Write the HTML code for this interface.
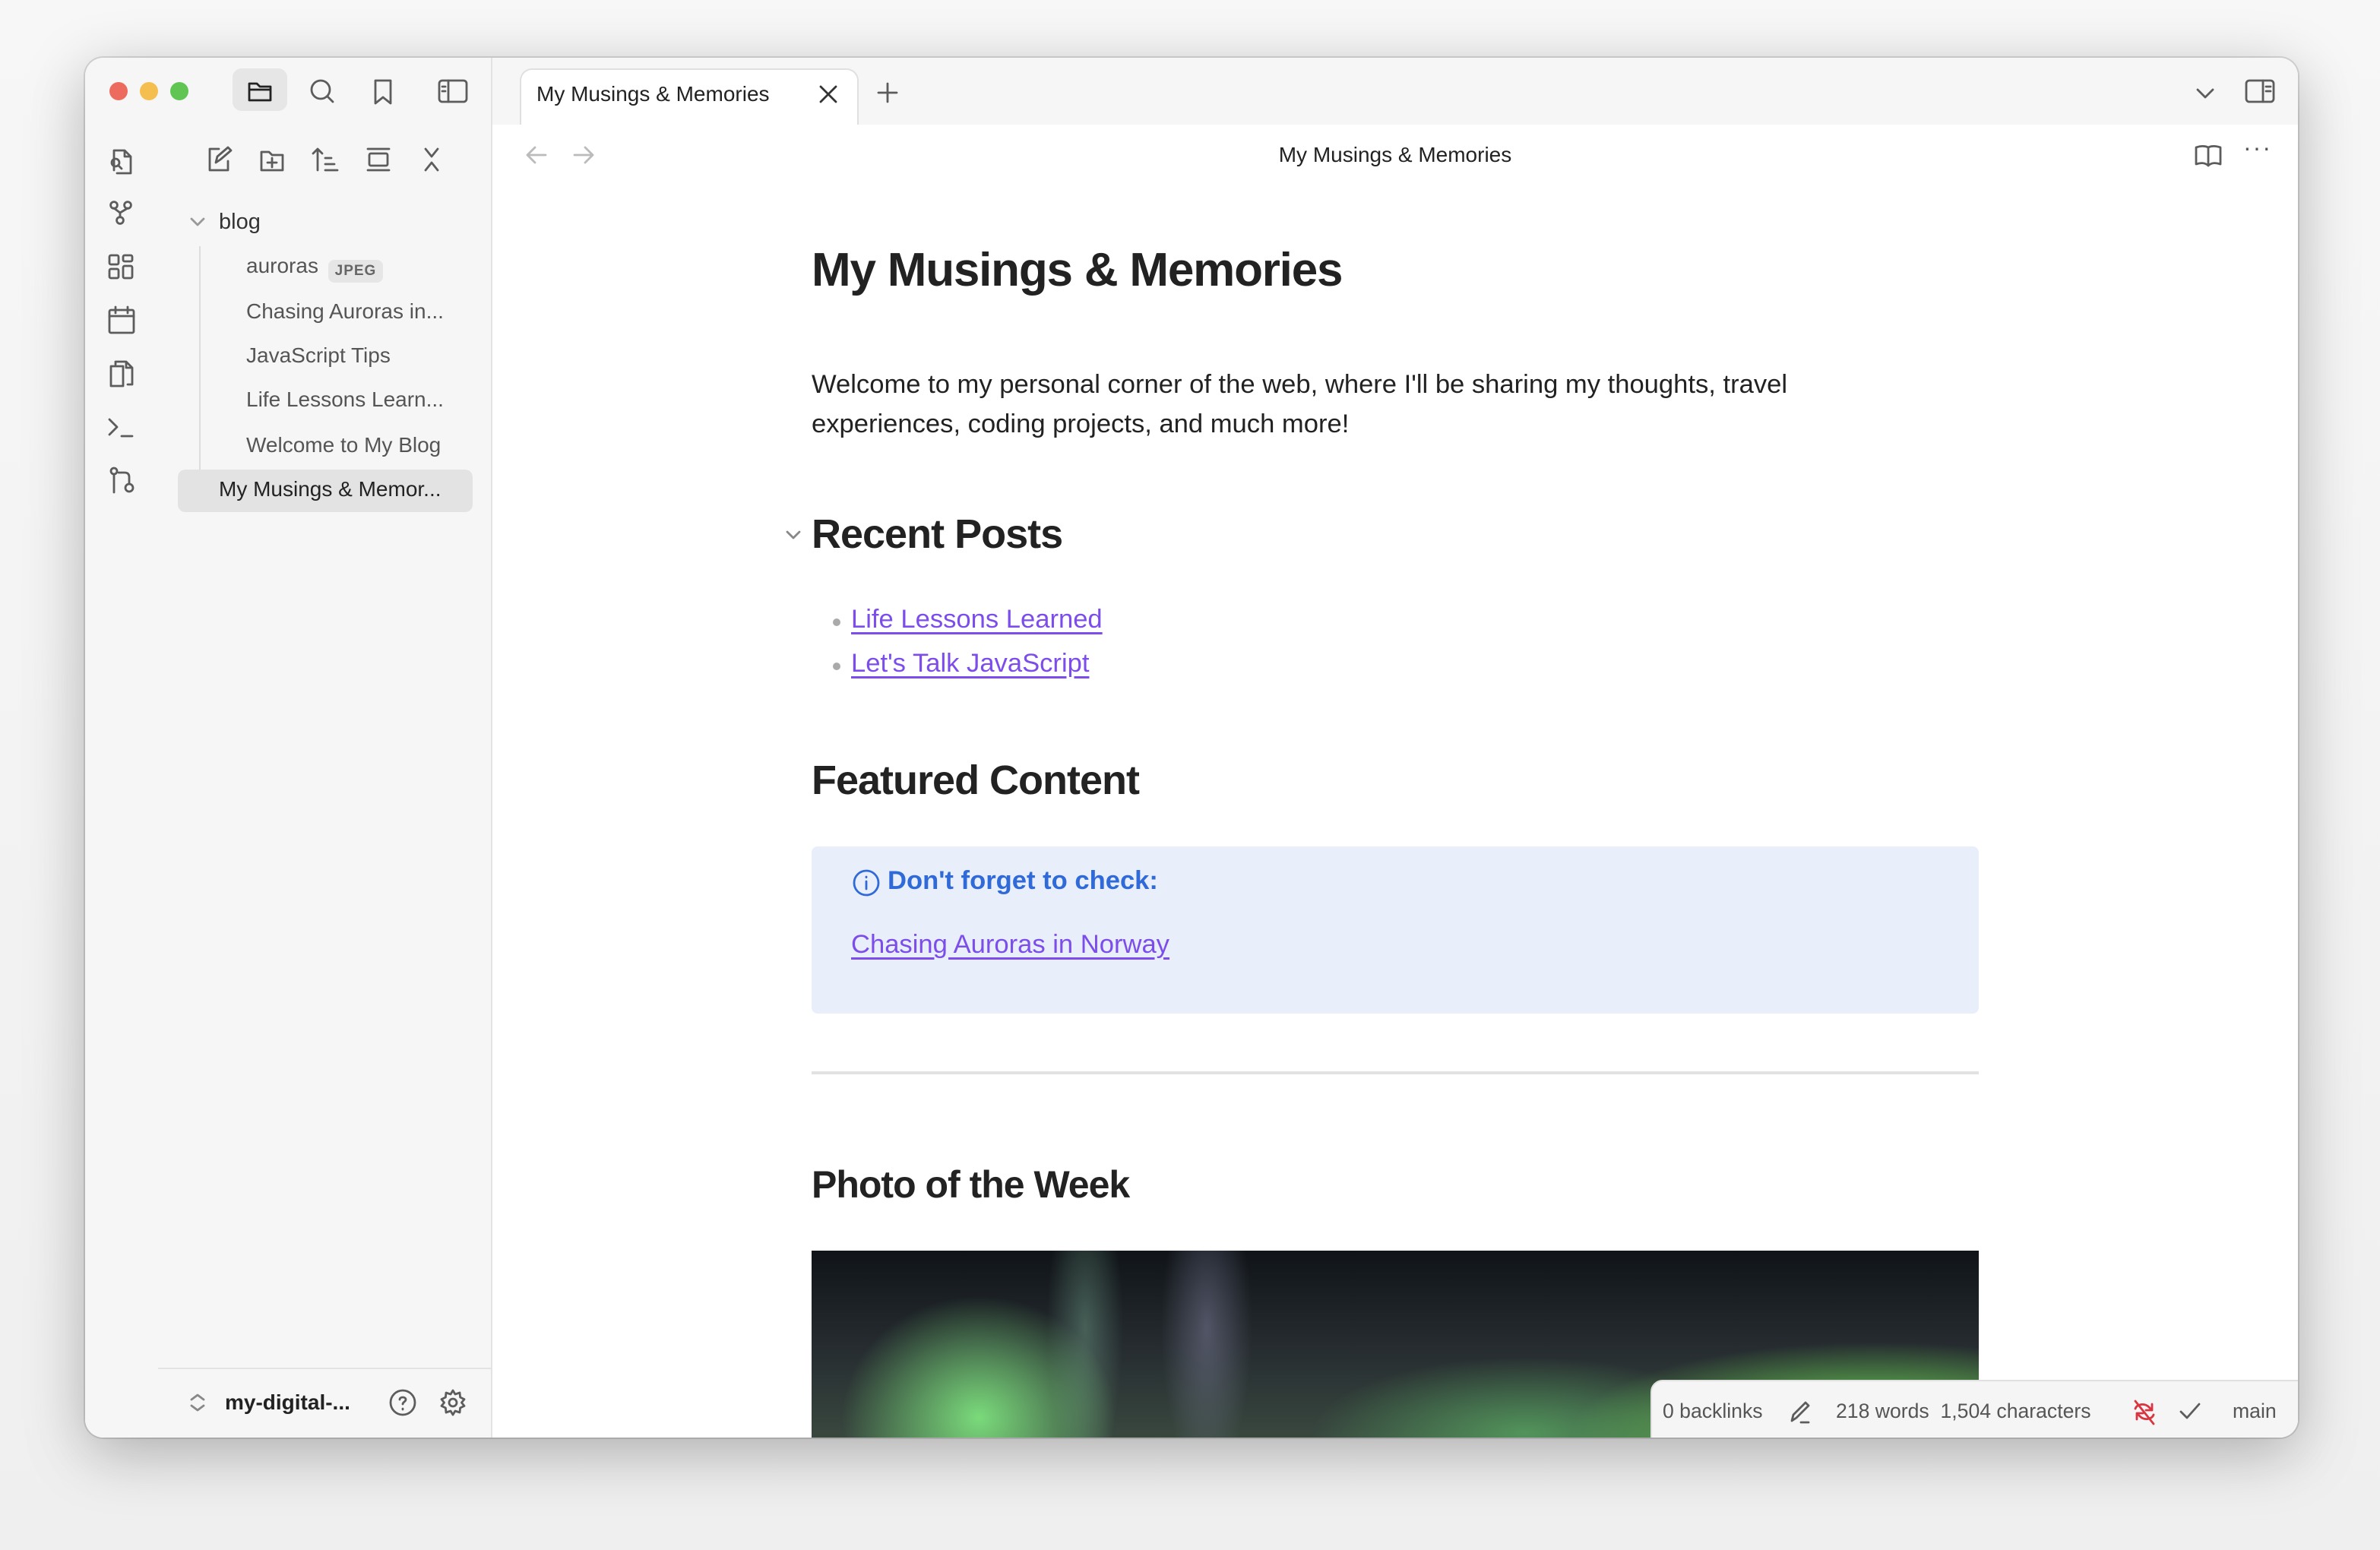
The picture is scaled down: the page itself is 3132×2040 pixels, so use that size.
<!DOCTYPE html>
<html><head><meta charset="utf-8"><style>
html,body{margin:0;padding:0;width:3132px;height:2040px;overflow:hidden;background:#f4f4f4}
.s{zoom:2;width:1566px;height:1020px;position:relative;font-family:"Liberation Sans",sans-serif;background:linear-gradient(#f7f7f7,#efefef)}
.win{position:absolute;left:56px;top:38px;width:1456px;height:908px;border-radius:12px;overflow:hidden;background:#fff;box-shadow:0 10px 40px rgba(0,0,0,.28),0 0 0 1px rgba(0,0,0,.12)}
.abs{position:absolute}
.ic{position:absolute;fill:none;stroke:#5c5c5c;stroke-width:1.4;stroke-linecap:round;stroke-linejoin:round}
.tb{left:0;top:0;width:1456px;height:44px;background:#f6f6f6;border-bottom:1px solid #e0e0e0}
.rib{left:0;top:44px;width:48px;height:864px;background:#f6f6f6;border-right:1px solid #e3e3e3}
.side{left:48px;top:44px;width:219px;height:864px;background:#f6f6f6;border-right:1px solid #e3e3e3}
.ft{font-size:14px;color:#555;position:absolute;left:58px;white-space:nowrap}
.main{left:268px;top:44px;width:1188px;height:864px;background:#fff}
.c{position:absolute;left:210px;color:#222}
a{color:#7c4dea;text-decoration:underline;text-underline-offset:3px}
</style></head><body><div class="s"><div class="win">
<div class="abs tb">
 <div class="abs" style="left:16px;top:16px;width:12px;height:12px;border-radius:6px;background:#ed6a5e"></div>
 <div class="abs" style="left:36px;top:16px;width:12px;height:12px;border-radius:6px;background:#f5bf4f"></div>
 <div class="abs" style="left:56px;top:16px;width:12px;height:12px;border-radius:6px;background:#61c554"></div>
 <div class="abs" style="left:97px;top:7px;width:36px;height:28px;border-radius:6px;background:#e6e6e6"></div>
 <svg class="ic" style="left:105px;top:12px;stroke:#222" width="20" height="20"><path d="M3 5h5l2 2h7v9H3z M3 9h14"/></svg>
 <svg class="ic" style="left:146px;top:12px" width="20" height="20"><circle cx="9" cy="9" r="6"/><path d="M13.5 13.5L17 17"/></svg>
 <svg class="ic" style="left:186px;top:12px" width="20" height="20"><path d="M5 3h10v15l-5-4-5 4z"/></svg>
 <svg class="ic" style="left:231px;top:12px" width="22" height="20"><rect x="2" y="3" width="18" height="14" rx="2"/><path d="M8 3v14M4 7h2M4 10h2"/></svg>
 <div class="abs" style="left:267px;top:0;width:1px;height:44px;background:#e3e3e3"></div>
 <div class="abs" style="left:286px;top:7px;width:221px;height:38px;background:#fff;border:1px solid #e0e0e0;border-bottom:none;border-radius:8px 8px 0 0"></div>
 <div class="abs" style="left:297px;top:16px;font-size:14px;color:#222">My Musings &amp; Memories</div>
 <svg class="ic" style="left:481px;top:16px;stroke:#333" width="16" height="16"><path d="M3 3l10 10M13 3L3 13"/></svg>
 <svg class="ic" style="left:519px;top:14px" width="18" height="18"><path d="M9 3v12M3 9h12"/></svg>
 <svg class="ic" style="left:1386px;top:14px" width="18" height="18"><path d="M4 7l5 5 5-5"/></svg>
 <svg class="ic" style="left:1420px;top:12px" width="22" height="20"><rect x="2" y="3" width="18" height="14" rx="2"/><path d="M13 3v14M15 7h3M15 10h3"/></svg>
</div>
<div class="abs rib">
 <svg class="ic" style="left:13px;top:13px" width="22" height="22"><path d="M6 17V4h7l4 4v11H8M13 4v4h4"/><circle cx="7" cy="12" r="2.5"/><path d="M9 14l2 2"/></svg>
 <svg class="ic" style="left:13px;top:48px" width="22" height="22"><circle cx="6" cy="5" r="2.2"/><circle cx="15" cy="5" r="2.2"/><circle cx="10" cy="15" r="2.2"/><path d="M6 7l4 3 5-3M10 10v3"/></svg>
 <svg class="ic" style="left:13px;top:83px" width="22" height="22"><rect x="3" y="3" width="6" height="6" rx="1"/><rect x="12" y="3" width="6" height="4" rx="1"/><rect x="3" y="12" width="6" height="6" rx="1"/><rect x="12" y="10" width="6" height="8" rx="1"/></svg>
 <svg class="ic" style="left:13px;top:118px" width="22" height="22"><rect x="3" y="4" width="16" height="15" rx="1"/><path d="M3 8h16M7 2v4M15 2v4"/></svg>
 <svg class="ic" style="left:13px;top:153px" width="22" height="22"><path d="M7 5V3h7l4 4v11h-3M14 3v4h4"/><path d="M4 6h8v13H4z"/></svg>
 <svg class="ic" style="left:13px;top:188px" width="22" height="22"><path d="M3 6l5 5-5 5M11 17h7"/></svg>
 <svg class="ic" style="left:13px;top:223px" width="22" height="22"><circle cx="6" cy="5" r="2"/><path d="M6 7v12M9 6h4c2 0 3 1 3 3v4"/><circle cx="16" cy="16" r="2.5"/></svg>
</div>
<div class="abs side">
 <svg class="ic" style="left:30px;top:13px" width="20" height="20"><path d="M10 3H4v14h12v-6M8 12l1-4 7-6 2 2-7 6z"/></svg>
 <svg class="ic" style="left:65px;top:13px" width="20" height="20"><path d="M3 5h5l2 2h7v10H3z M10 9v6M7 12h6"/></svg>
 <svg class="ic" style="left:100px;top:13px" width="20" height="20"><path d="M5 17V3M2 6l3-3 3 3M10 9h4M10 13h6M10 17h8"/></svg>
 <svg class="ic" style="left:135px;top:13px" width="20" height="20"><path d="M3 3h14M3 17h14"/><rect x="4" y="6" width="12" height="8" rx="1"/></svg>
 <svg class="ic" style="left:170px;top:13px" width="20" height="20"><path d="M6 3l4 5 4-5M6 17l4-5 4 5"/></svg>
 <svg class="ic" style="left:20px;top:58px;stroke:#999" width="12" height="12"><path d="M2 4l4 4 4-4"/></svg>
 <div class="ft" style="left:40px;top:56px;color:#333;font-size:14.5px">blog</div>
 <div class="abs" style="left:27px;top:80px;width:1px;height:148px;background:#ddd"></div>
 <div class="ft" style="top:85px">auroras</div>
 <div class="abs" style="left:112px;top:89px;width:36px;height:15px;border-radius:4px;background:#e6e6e6;font-size:9.5px;font-weight:bold;color:#666;text-align:center;line-height:15px;letter-spacing:.5px">JPEG</div>
 <div class="ft" style="top:115px">Chasing Auroras in...</div>
 <div class="ft" style="top:144px">JavaScript Tips</div>
 <div class="ft" style="top:173px">Life Lessons Learn...</div>
 <div class="ft" style="top:203px">Welcome to My Blog</div>
 <div class="abs" style="left:13px;top:227px;width:194px;height:28px;border-radius:5px;background:#e3e3e3"></div>
 <div class="ft" style="left:40px;top:232px;color:#222">My Musings &amp; Memor...</div>
 <div class="abs" style="left:0;top:818px;width:219px;height:1px;background:#e3e3e3"></div>
 <svg class="ic" style="left:20px;top:834px;stroke:#888" width="12" height="14"><path d="M2 5l4-3 4 3M2 9l4 3 4-3"/></svg>
 <div class="ft" style="left:44px;top:833px;color:#222;font-weight:bold;font-size:14px">my-digital-...</div>
 <svg class="ic" style="left:151px;top:831px" width="20" height="20"><circle cx="10" cy="10" r="8"/><path d="M8 8c0-2 4-2 4 0 0 1.5-2 1.5-2 3M10 14v.5"/></svg>
 <svg class="ic" style="left:184px;top:831px" width="20" height="20"><circle cx="10" cy="10" r="2.5"/><path d="M10 2l1.5 2.5 3-1 .3 3 2.7 1.3-1.8 2.2 1.8 2.2-2.7 1.3-.3 3-3-1L10 18l-1.5-2.5-3 1-.3-3L2.5 12.2 4.3 10 2.5 7.8l2.7-1.3.3-3 3 1z"/></svg>
</div>
<div class="abs main">
 <svg class="ic" style="left:20px;top:12px;stroke:#bbb" width="18" height="16"><path d="M15 8H3M8 3L3 8l5 5"/></svg>
 <svg class="ic" style="left:51px;top:12px;stroke:#bbb" width="18" height="16"><path d="M3 8h12M10 3l5 5-5 5"/></svg>
 <div class="abs" style="left:0;width:1188px;top:12px;text-align:center;font-size:14px;color:#222">My Musings &amp; Memories</div>
 <svg class="ic" style="left:1119px;top:11px" width="20" height="18"><path d="M10 4v12M10 4C8 3 5 3 2 4v11c3-1 6-1 8 1 2-2 5-2 8-1V4c-3-1-6-1-8 0"/></svg>
 <div class="abs" style="left:1152px;top:6px;font-size:16px;color:#555;letter-spacing:1px">···</div>
 <div class="c" style="top:78px;font-size:31px;font-weight:bold;letter-spacing:-.6px">My Musings &amp; Memories</div>
 <div class="c" style="top:158px;font-size:17.3px;line-height:26px;width:700px">Welcome to my personal corner of the web, where I'll be sharing my thoughts, travel experiences, coding projects, and much more!</div>
 <svg class="ic" style="left:192px;top:264px;stroke:#888" width="12" height="12"><path d="M2 4l4 4 4-4"/></svg>
 <div class="c" style="top:254px;font-size:27px;font-weight:bold;letter-spacing:-.5px">Recent Posts</div>
 <div class="abs" style="left:224px;top:325px;width:5px;height:5px;border-radius:3px;background:#aaa"></div>
 <div class="c" style="left:236px;top:316px;font-size:17.3px"><a>Life Lessons Learned</a></div>
 <div class="abs" style="left:224px;top:354px;width:5px;height:5px;border-radius:3px;background:#aaa"></div>
 <div class="c" style="left:236px;top:345px;font-size:17.3px"><a>Let's Talk JavaScript</a></div>
 <div class="c" style="top:416px;font-size:27px;font-weight:bold;letter-spacing:-.5px">Featured Content</div>
 <div class="abs" style="left:210px;top:475px;width:768px;height:110px;border-radius:4px;background:#e8eefa"></div>
 <svg class="ic" style="left:236px;top:489px;stroke:#2f6ad8" width="20" height="20"><circle cx="10" cy="10" r="8"/><path d="M10 9v5M10 6v.3"/></svg>
 <div class="c" style="left:260px;top:488px;font-size:17.3px;font-weight:bold;color:#2f6ad8">Don't forget to check:</div>
 <div class="c" style="left:236px;top:530px;font-size:17.3px"><a>Chasing Auroras in Norway</a></div>
 <div class="abs" style="left:210px;top:623px;width:768px;height:2px;background:#e2e2e2"></div>
 <div class="c" style="top:683px;font-size:25px;font-weight:bold;letter-spacing:-.5px">Photo of the Week</div>
 <div class="abs" style="left:210px;top:741px;width:768px;height:128px;overflow:hidden;background:
  radial-gradient(ellipse 90px 80px at 110px 110px,rgba(130,235,130,.9),transparent),
  radial-gradient(ellipse 200px 60px at 700px 120px,rgba(120,245,90,.95),transparent),
  radial-gradient(ellipse 140px 50px at 470px 120px,rgba(100,200,110,.6),transparent),
  radial-gradient(ellipse 30px 100px at 260px 50px,rgba(170,170,210,.35),transparent),
  radial-gradient(ellipse 25px 100px at 180px 50px,rgba(140,200,170,.35),transparent),
  linear-gradient(#101418,#262c30 50%,#3a4a40)"></div>
 <div class="abs" style="left:762px;top:826px;width:430px;height:40px;background:#f5f5f5;border:1px solid #e0e0e0;border-radius:8px 0 0 0"></div>
 <div class="abs" style="left:770px;top:839px;font-size:13.3px;color:#555;white-space:nowrap">0 backlinks</div>
 <svg class="ic" style="left:852px;top:838px" width="18" height="18"><path d="M3 15l1-4 8-8 2 2-8 8zM9 16h5"/></svg>
 <div class="abs" style="left:884px;top:839px;font-size:13.3px;color:#555;white-space:nowrap">218 words&nbsp;&nbsp;1,504 characters</div>
 <svg class="ic" style="left:1077px;top:837px;stroke:#d9343f" width="20" height="20"><path d="M4 8c1-3 6-4 9-1l2 2M16 12c-1 3-6 4-9 1l-2-2M15 5v4h-4M5 15v-4h4M4 3l12 15"/></svg>
 <svg class="ic" style="left:1108px;top:838px" width="18" height="18"><path d="M3 9l4 4 8-9"/></svg>
 <div class="abs" style="left:1145px;top:839px;font-size:13.3px;color:#555">main</div>
</div>
</div></div></body></html>
